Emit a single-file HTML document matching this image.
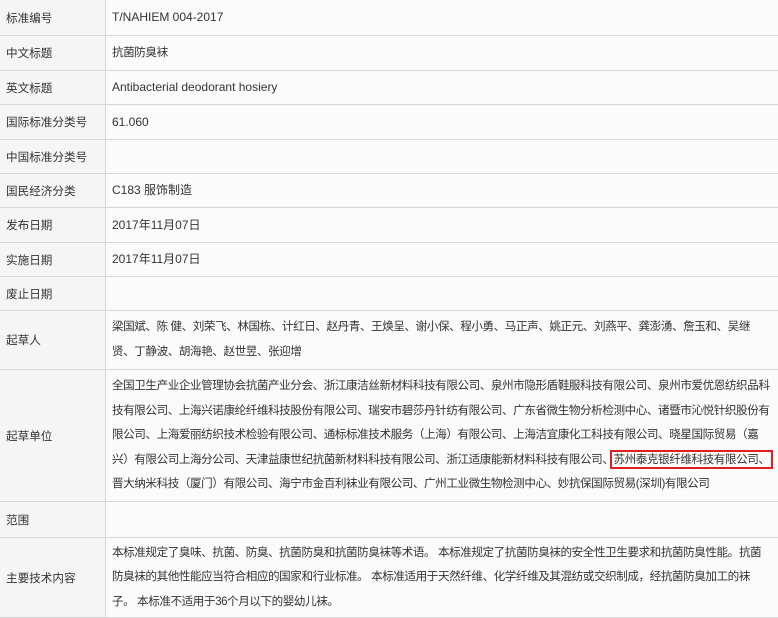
<!DOCTYPE html>
<html><head><meta charset="utf-8"><style>
body{margin:0;width:778px;height:618px;overflow:hidden;background:#fff;font-family:"Liberation Sans","Microsoft YaHei","Noto Sans CJK SC",sans-serif;font-size:12px;color:#333}
.r{position:absolute;left:0;width:778px;border-bottom:1px solid #d6d6d6;box-sizing:border-box}
.l{position:absolute;left:0;top:0;bottom:0;width:106px;background:#f5f5f5;border-right:1px solid #d6d6d6;display:flex;align-items:center;padding-left:6px;box-sizing:border-box;font-size:11.6px}
.v{position:absolute;left:107px;right:0;top:0;bottom:0;background:#fbfbfb;display:flex;align-items:center;padding-left:5px;box-sizing:border-box;line-height:24.6px;overflow:hidden}
.c{font-size:11.6px;letter-spacing:-0.45px;white-space:nowrap}
.bx{outline:2px solid #e02020;outline-offset:1px}
</style></head><body>
<div class="r" style="top:0;height:36px"><div class="l">标准编号</div><div class="v">T/NAHIEM 004-2017</div></div>
<div class="r" style="top:36px;height:35px"><div class="l">中文标题</div><div class="v c">抗菌防臭袜</div></div>
<div class="r" style="top:71px;height:34px"><div class="l">英文标题</div><div class="v">Antibacterial deodorant hosiery</div></div>
<div class="r" style="top:105px;height:35px"><div class="l">国际标准分类号</div><div class="v">61.060</div></div>
<div class="r" style="top:140px;height:34px"><div class="l">中国标准分类号</div><div class="v"></div></div>
<div class="r" style="top:174px;height:34px"><div class="l">国民经济分类</div><div class="v">C183 服饰制造</div></div>
<div class="r" style="top:208px;height:35px"><div class="l">发布日期</div><div class="v">2017年11月07日</div></div>
<div class="r" style="top:243px;height:34px"><div class="l">实施日期</div><div class="v">2017年11月07日</div></div>
<div class="r" style="top:277px;height:34px"><div class="l">废止日期</div><div class="v"></div></div>
<div class="r" style="top:311px;height:59px"><div class="l">起草人</div><div class="v c"><div>梁国斌、陈 健、刘荣飞、林国栋、计红日、赵丹青、王焕呈、谢小保、程小勇、马正声、姚正元、刘燕平、龚澎湧、詹玉和、吴继<br>贤、丁静波、胡海艳、赵世昱、张迎增</div></div></div>
<div class="r" style="top:370px;height:132px"><div class="l">起草单位</div><div class="v c"><div>全国卫生产业企业管理协会抗菌产业分会、浙江康洁丝新材料科技有限公司、泉州市隐形盾鞋服科技有限公司、泉州市爱优恩纺织品科<br>技有限公司、上海兴诺康纶纤维科技股份有限公司、瑞安市碧莎丹针纺有限公司、广东省微生物分析检测中心、诸暨市沁悦针织股份有<br>限公司、上海爱丽纺织技术检验有限公司、通标标准技术服务（上海）有限公司、上海洁宜康化工科技有限公司、晓星国际贸易（嘉<br>兴）有限公司上海分公司、天津益康世纪抗菌新材料科技有限公司、浙江适康能新材料科技有限公司、<span class="bx">苏州泰克银纤维科技有限公司、</span><br>晋大纳米科技（厦门）有限公司、海宁市金百利袜业有限公司、广州工业微生物检测中心、妙抗保国际贸易(深圳)有限公司</div></div></div>
<div class="r" style="top:502px;height:36px"><div class="l">范围</div><div class="v"></div></div>
<div class="r" style="top:538px;height:80px"><div class="l">主要技术内容</div><div class="v c"><div>本标准规定了臭味、抗菌、防臭、抗菌防臭和抗菌防臭袜等术语。 本标准规定了抗菌防臭袜的安全性卫生要求和抗菌防臭性能。抗菌<br>防臭袜的其他性能应当符合相应的国家和行业标准。 本标准适用于天然纤维、化学纤维及其混纺或交织制成，经抗菌防臭加工的袜<br>子。 本标准不适用于36个月以下的婴幼儿袜。</div></div></div>
</body></html>
